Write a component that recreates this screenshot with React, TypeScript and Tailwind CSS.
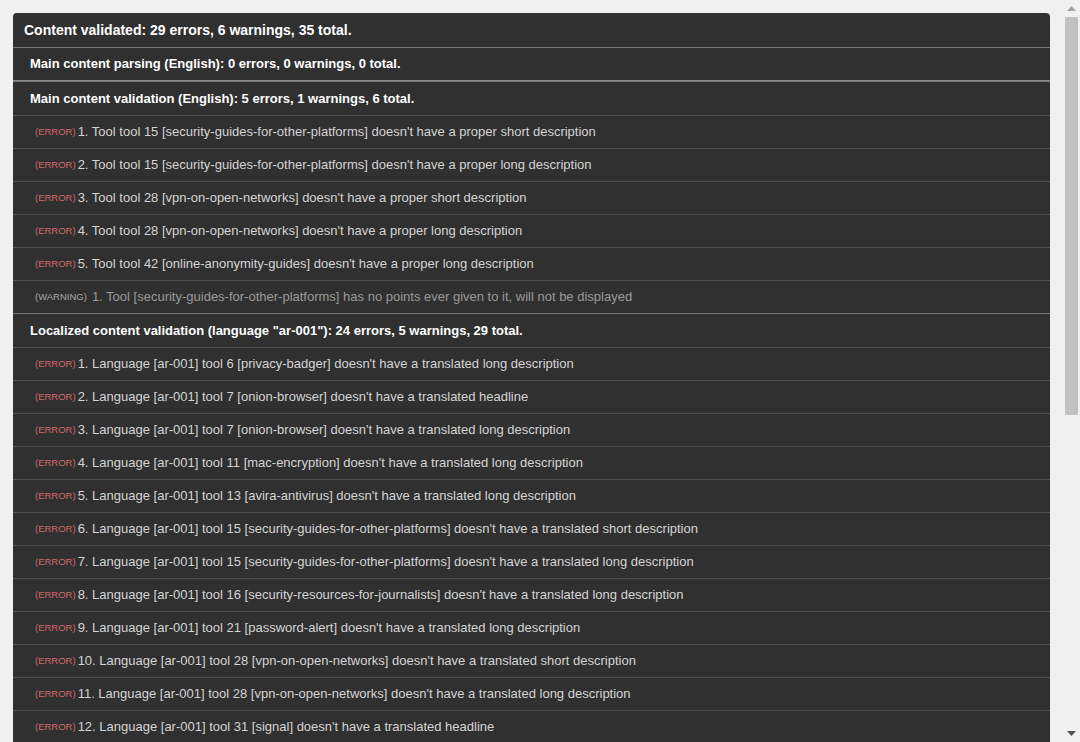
import React from 'react';

type Issue = { level: 'error' | 'warning'; text: string };

interface Section {
  title: string;
  issues: Issue[];
}

const err = (text: string): Issue => ({ level: 'error', text });
const warn = (text: string): Issue => ({ level: 'warning', text });

const sections: Section[] = [
  {
    title: 'Main content parsing (English): 0 errors, 0 warnings, 0 total.',
    issues: [],
  },
  {
    title: 'Main content validation (English): 5 errors, 1 warnings, 6 total.',
    issues: [
      err("1. Tool tool 15 [security-guides-for-other-platforms] doesn't have a proper short description"),
      err("2. Tool tool 15 [security-guides-for-other-platforms] doesn't have a proper long description"),
      err("3. Tool tool 28 [vpn-on-open-networks] doesn't have a proper short description"),
      err("4. Tool tool 28 [vpn-on-open-networks] doesn't have a proper long description"),
      err("5. Tool tool 42 [online-anonymity-guides] doesn't have a proper long description"),
      warn('1. Tool [security-guides-for-other-platforms] has no points ever given to it, will not be displayed'),
    ],
  },
  {
    title: 'Localized content validation (language "ar-001"): 24 errors, 5 warnings, 29 total.',
    issues: [
      err("1. Language [ar-001] tool 6 [privacy-badger] doesn't have a translated long description"),
      err("2. Language [ar-001] tool 7 [onion-browser] doesn't have a translated headline"),
      err("3. Language [ar-001] tool 7 [onion-browser] doesn't have a translated long description"),
      err("4. Language [ar-001] tool 11 [mac-encryption] doesn't have a translated long description"),
      err("5. Language [ar-001] tool 13 [avira-antivirus] doesn't have a translated long description"),
      err("6. Language [ar-001] tool 15 [security-guides-for-other-platforms] doesn't have a translated short description"),
      err("7. Language [ar-001] tool 15 [security-guides-for-other-platforms] doesn't have a translated long description"),
      err("8. Language [ar-001] tool 16 [security-resources-for-journalists] doesn't have a translated long description"),
      err("9. Language [ar-001] tool 21 [password-alert] doesn't have a translated long description"),
      err("10. Language [ar-001] tool 28 [vpn-on-open-networks] doesn't have a translated short description"),
      err("11. Language [ar-001] tool 28 [vpn-on-open-networks] doesn't have a translated long description"),
      err("12. Language [ar-001] tool 31 [signal] doesn't have a translated headline"),
      err("13. Language [ar-001] tool 31 [signal] doesn't have a translated long description"),
      err("14. Language [ar-001] tool 33 [tails] doesn't have a translated long description"),
      err("15. Language [ar-001] tool 34 [keepassx] doesn't have a translated short description"),
      err("16. Language [ar-001] tool 34 [keepassx] doesn't have a translated long description"),
      err("17. Language [ar-001] tool 36 [https-everywhere] doesn't have a translated long description"),
      err("18. Language [ar-001] tool 37 [veracrypt] doesn't have a translated long description"),
      err("19. Language [ar-001] tool 38 [two-factor-authentication] doesn't have a translated headline"),
      err("20. Language [ar-001] tool 38 [two-factor-authentication] doesn't have a translated long description"),
      err("21. Language [ar-001] tool 40 [ublock-origin] doesn't have a translated long description"),
      err("22. Language [ar-001] tool 41 [tor-browser] doesn't have a translated short description"),
      err("23. Language [ar-001] tool 42 [online-anonymity-guides] doesn't have a translated short description"),
      err("24. Language [ar-001] tool 42 [online-anonymity-guides] doesn't have a translated long description"),
      warn('1. Language [ar-001] tool 6 [privacy-badger] has an untranslated name'),
      warn('2. Language [ar-001] tool 11 [mac-encryption] has an untranslated name'),
      warn('3. Language [ar-001] tool 21 [password-alert] has an untranslated name'),
      warn('4. Language [ar-001] tool 33 [tails] has an untranslated name'),
      warn('5. Language [ar-001] tool 40 [ublock-origin] has an untranslated name'),
    ],
  },
];

const IssueRow = ({ issue }: { issue: Issue }) => (
  <div className="flex h-[33px] items-center whitespace-nowrap border-t border-[#505050] pl-[22px] pr-3">
    {issue.level === 'error' ? (
      <span className="mr-[2px] text-[9.5px] text-[#d06a6a]">(ERROR)</span>
    ) : (
      <span className="mr-[5px] text-[9.5px] text-[#a8a8a8]">(WARNING)</span>
    )}
    <span className={`text-[13px] ${issue.level === 'error' ? 'text-[#d4d4d4]' : 'text-[#9a9a9a]'}`}>
      {issue.text}
    </span>
  </div>
);

// Classic window scrollbar on the right edge
const Scrollbar = () => (
  <div className="flex w-[17px] shrink-0 flex-col bg-[#f1f1f1]">
    <div className="flex h-[17px] items-center justify-center">
      <svg width="9" height="5" viewBox="0 0 9 5">
        <polygon points="4.5,0 9,5 0,5" fill="#a3a3a3" />
      </svg>
    </div>
    <div className="flex-1 px-[2px]">
      <div className="h-[398px] bg-[#c1c1c1]" />
    </div>
    <div className="flex h-[17px] items-center justify-center">
      <svg width="9" height="5" viewBox="0 0 9 5">
        <polygon points="0,0 9,0 4.5,5" fill="#505050" />
      </svg>
    </div>
  </div>
);

export default function App() {
  return (
    <div className="flex h-screen overflow-hidden bg-[#f0f0f0] font-['Liberation_Sans',Arial,sans-serif]">
      <div className="min-w-0 flex-1 overflow-hidden p-[13px]">
        <div className="overflow-hidden rounded-[4px] bg-[#303030]">
          {/* Summary */}
          <div className="flex h-[34px] items-center px-[11px] text-[14px] font-bold text-white">
            Content validated: 29 errors, 6 warnings, 35 total.
          </div>

          {sections.map((section, i) => (
            <div key={i} className={i === 0 ? 'border-b border-[#8a8a8a]' : ''}>
              <div
                className={`flex items-center whitespace-nowrap border-t border-[#787878] px-[17px] text-[13px] font-bold text-white ${
                  i === 0 ? 'h-[33px]' : 'h-[34px]'
                }`}
              >
                {section.title}
              </div>
              {section.issues.map((issue, j) => (
                <IssueRow key={j} issue={issue} />
              ))}
            </div>
          ))}
        </div>
      </div>
      <Scrollbar />
    </div>
  );
}
